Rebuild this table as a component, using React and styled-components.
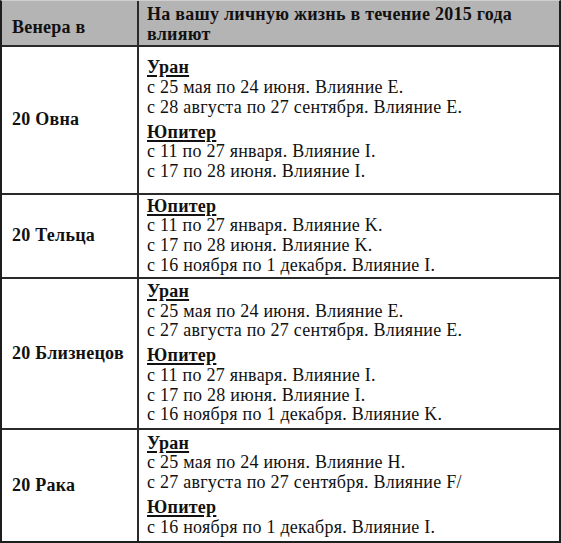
import React from 'react'
import styled, { createGlobalStyle } from 'styled-components'

const GlobalStyle = createGlobalStyle`
  html, body {
    margin: 0;
    padding: 0;
    background: #fff;
  }
`

const Table = styled.div`
  width: 561px;
  height: 543px;
  box-sizing: border-box;
  display: grid;
  grid-template-columns: 137px 1fr;
  grid-template-rows: 46px 148px 84px 151px 111px;
  border-top: 1px solid #cfcfcf;
  border-left: 2px solid #1e1e1e;
  border-right: 2px solid #1e1e1e;
  border-bottom: 2px solid #1e1e1e;
  box-shadow: inset 0 1px 0 #2a2a2a;
  font-family: "Liberation Serif", "DejaVu Serif", serif;
  color: #111;
  letter-spacing: 0.25px;
`

const Cell = styled.div`
  box-sizing: border-box;
  display: flex;
  flex-direction: column;
  justify-content: center;
  border-bottom: ${({ $last }) => ($last ? 'none' : '2px solid #2a2a2a')};
  border-right: ${({ $side }) => ($side ? '2px solid #2a2a2a' : 'none')};
  background: ${({ $head }) => ($head ? '#b4b4b4' : '#fff')};
  padding: ${({ $side }) => ($side ? '0 6px 0 10px' : '0 6px 0 8px')};
  font-size: 18px;
  line-height: 19.7px;
`

const HeadText = styled.div`
  font-weight: bold;
  line-height: 20px;
  padding-top: ${({ $top }) => $top || 0}px;
`

const Sign = styled.div`
  font-weight: bold;
`

const Group = styled.div`
  & + & {
    margin-top: 5px;
  }
`

const Planet = styled.div`
  font-weight: bold;
  text-decoration: underline;
  text-underline-offset: 2px;
  text-decoration-thickness: 1.5px;
`

const Line = styled.div``

const rows = [
  {
    sign: '20 Овна',
    groups: [
      { planet: 'Уран', lines: ['с 25 мая по 24 июня. Влияние E.', 'с 28 августа по 27 сентября. Влияние E.'] },
      { planet: 'Юпитер', lines: ['с 11 по 27 января. Влияние I.', 'с 17 по 28 июня. Влияние I.'] }
    ]
  },
  {
    sign: '20 Тельца',
    groups: [
      {
        planet: 'Юпитер',
        lines: ['с 11 по 27 января. Влияние K.', 'с 17 по 28 июня. Влияние K.', 'с 16 ноября по 1 декабря. Влияние I.']
      }
    ]
  },
  {
    sign: '20 Близнецов',
    groups: [
      { planet: 'Уран', lines: ['с 25 мая по 24 июня. Влияние E.', 'с 27 августа по 27 сентября. Влияние E.'] },
      {
        planet: 'Юпитер',
        lines: ['с 11 по 27 января. Влияние I.', 'с 17 по 28 июня. Влияние I.', 'с 16 ноября по 1 декабря. Влияние K.']
      }
    ]
  },
  {
    sign: '20 Рака',
    groups: [
      { planet: 'Уран', lines: ['с 25 мая по 24 июня. Влияние H.', 'с 27 августа по 27 сентября. Влияние F/'] },
      { planet: 'Юпитер', lines: ['с 16 ноября по 1 декабря. Влияние I.'] }
    ]
  }
]

function App() {
  return (
    <>
      <GlobalStyle />
      <Table>
        <Cell $head $side>
          <HeadText $top={7}>Венера в</HeadText>
        </Cell>
        <Cell $head>
          <HeadText $top={2}>
            На вашу личную жизнь в течение 2015 года
            <br />
            влияют
          </HeadText>
        </Cell>
        {rows.map((row, i) => {
          const last = i === rows.length - 1
          return (
            <React.Fragment key={row.sign}>
              <Cell $side $last={last}>
                <Sign>{row.sign}</Sign>
              </Cell>
              <Cell $last={last}>
                {row.groups.map((g) => (
                  <Group key={g.planet}>
                    <Planet>{g.planet}</Planet>
                    {g.lines.map((l) => (
                      <Line key={l}>{l}</Line>
                    ))}
                  </Group>
                ))}
              </Cell>
            </React.Fragment>
          )
        })}
      </Table>
    </>
  )
}

export default App
